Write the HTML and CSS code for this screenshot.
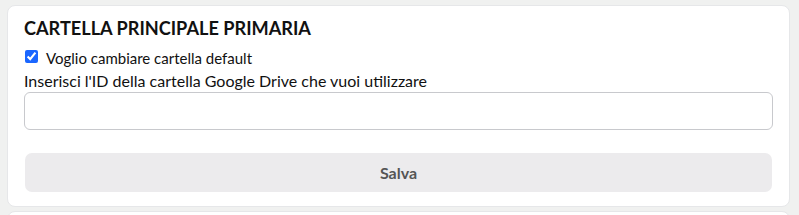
FILE: index.html
```html
<!DOCTYPE html>
<html>
<head>
<meta charset="utf-8">
<title>Cartella principale</title>
<link rel="stylesheet" href="styles.css">
</head>
<body>

<div class="card">
    <h3 class="ctit">CARTELLA PRINCIPALE PRIMARIA</h3>
    <label class="chk"><input type="checkbox" checked> Voglio cambiare cartella default</label>
    <p class="lbl">Inserisci l'ID della cartella Google Drive che vuoi utilizzare</p>
    <input type="text" class="ipt">
    <button class="btn">Salva</button>
</div>
<div class="card card2"></div>

</body>
</html>
```

FILE: styles.css
```css
body,h3,p{margin:0;padding:0;}
body{background:#f0f1f0;font:15px/1.3 Lato,'Noto Sans',sans-serif;color:#111;}

.card{margin:5px 9px 0 7px;background:#fff;border:1px solid #e6e7e9;border-radius:8px;padding:11px 16px 14px 16px;display:flex;flex-direction:column;}
.card2{height:40px;margin-top:4px;}
.ctit{font-size:18.15px;line-height:22px;font-weight:700;color:#111;}
.chk{display:flex;align-items:flex-start;gap:8px;line-height:20px;margin-top:9px;}
.chk input{margin:2px 0 0 1px;width:13px;height:13px;accent-color:#1a66ff;}
.lbl{font-size:16px;line-height:20px;margin-top:3px;}
.ipt{margin-top:1px;height:38px;box-sizing:border-box;border:1px solid #c8c9cd;border-radius:6px;background:#fff;}
.btn{margin:23px 1px 0 1px;height:39px;border:0;border-radius:7px;background:#ecebed;color:#555;font:700 16px Lato,'Noto Sans',sans-serif;}
```
